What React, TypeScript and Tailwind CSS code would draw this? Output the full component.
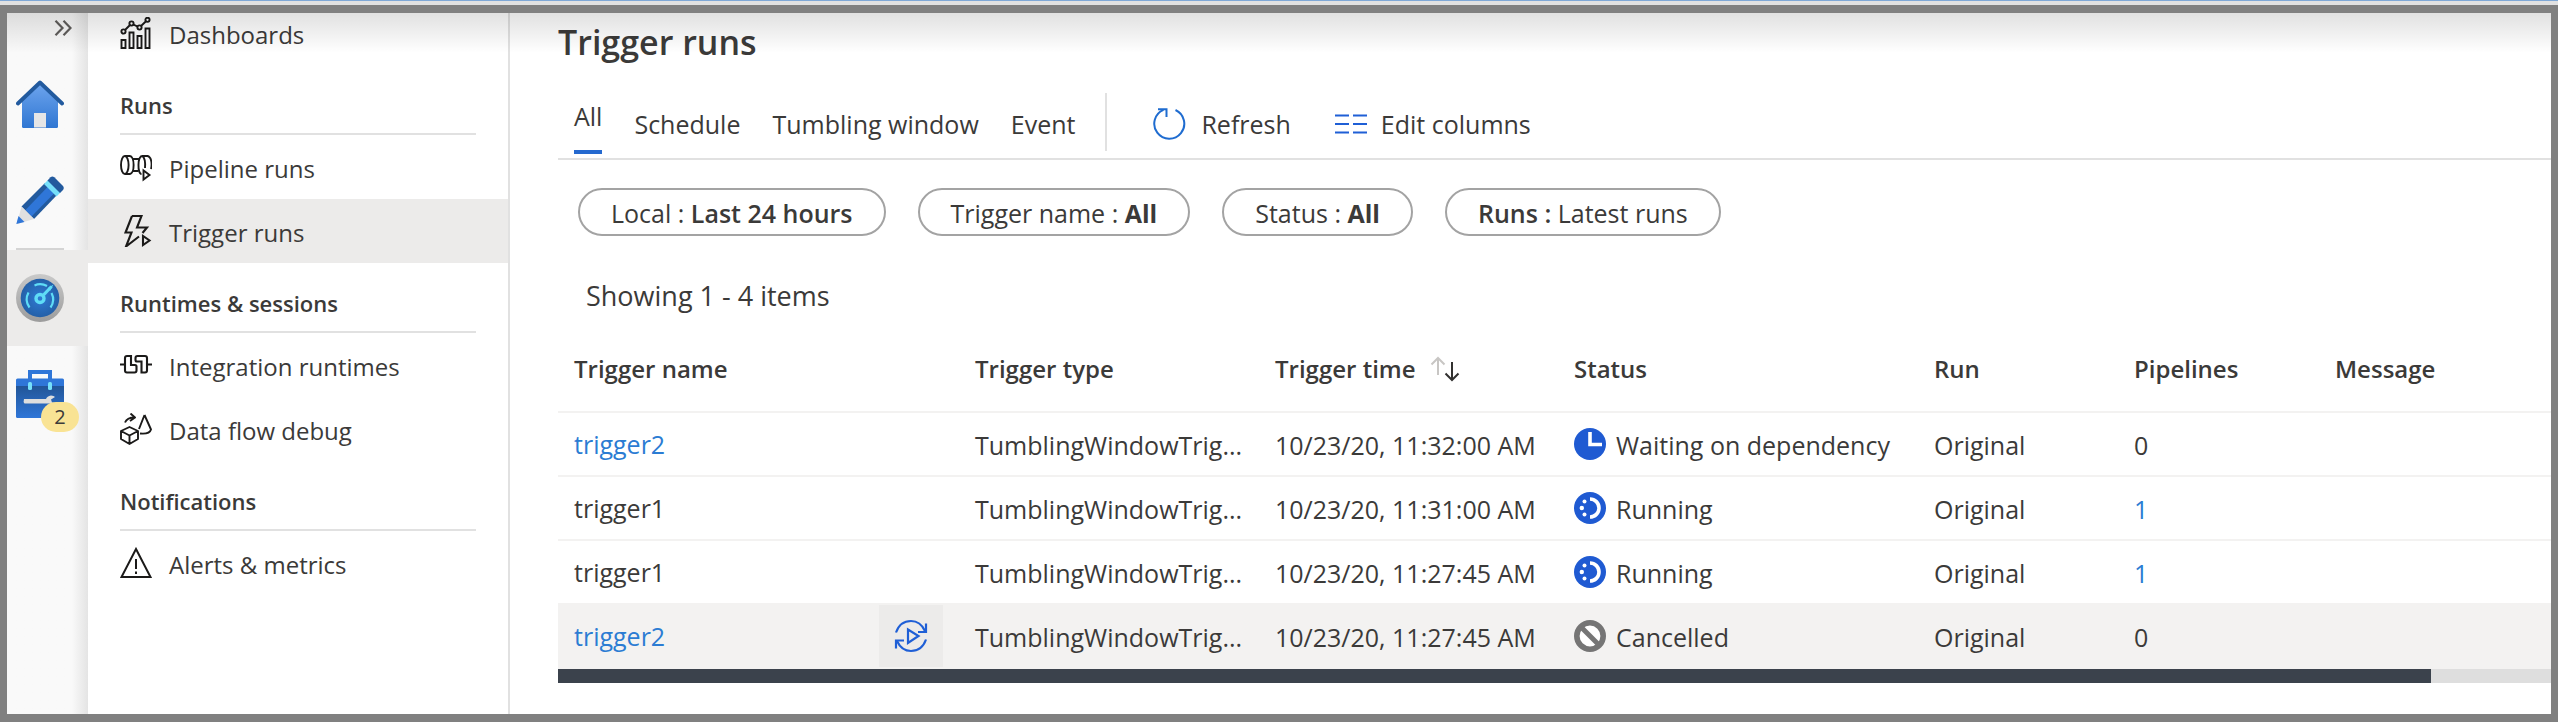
import type { ReactNode } from "react";

function ExpandIcon() {
  return (
    <svg viewBox="0 0 18 16" className="h-4 w-[18px]" fill="none" stroke="#605e5c" strokeWidth="2.2">
      <path d="M1.5 .8 8.5 8l-7 7.2M9.5.8l7 7.2-7 7.2" />
    </svg>
  );
}

function HomeIcon() {
  return (
    <svg viewBox="0 0 48 48" className="size-12">
      <defs>
        <linearGradient id="house" x1="0" y1="0" x2="0" y2="1">
          <stop offset="0" stopColor="#6ea5ee" />
          <stop offset="1" stopColor="#2f76d2" />
        </linearGradient>
      </defs>
      <path d="M24 3 42 20v26.500q0 1.500-1.500 1.500h-33Q6 48 6 46.500V20Z" fill="url(#house)" />
      <path d="M18 33h12v14.500H18Z" fill="#e6e6e6" />
      <path d="M1.900 23.500 24 2.500l22.100 21" fill="none" stroke="#225a9e" strokeWidth="3.800" strokeLinejoin="round" strokeLinecap="round" />
    </svg>
  );
}

function PencilIcon() {
  return (
    <svg viewBox="0 0 48 48" className="size-12">
      <path d="M5.500 30.500 29 7l12 12L18 43Z" fill="#225a9e" />
      <path d="M9.500 34 32 10.500l6.500 6.500L15.500 40.500Z" fill="#2f76d8" />
      <path d="M28 8l4-4 12.500 12.500-4 4Z" fill="#76e0fa" />
      <path d="M31.500 4.500 34.500 1.300q1.800-1.500 3.800 0L47 10q1.500 1.800 0 4L44 17Z" fill="#225a9e" />
      <path d="M5.500 30.500 18 43 1 48Z" fill="#e0e0e0" />
      <path d="M2.500 40 8.500 46 .3 48Z" fill="#2f76d8" />
    </svg>
  );
}

function MonitorIcon() {
  return (
    <svg viewBox="0 0 48 48" className="size-12">
      <defs>
        <linearGradient id="bezel" x1="0" y1="0" x2="0" y2="1">
          <stop offset="0" stopColor="#c9c9c9" />
          <stop offset="1" stopColor="#9c9c9c" />
        </linearGradient>
        <radialGradient id="dial">
          <stop offset="0" stopColor="#2f7ad4" />
          <stop offset="1" stopColor="#2460a8" />
        </radialGradient>
      </defs>
      <circle cx="24" cy="24" r="24" fill="url(#bezel)" />
      <circle cx="24" cy="24" r="19.300" fill="url(#dial)" />
      <g fill="none" stroke="#5fdcf6" strokeWidth="2.200">
        <path d="M13.500 33.500A14 14 0 0 1 12.500 18.500" />
        <path d="M18.500 11.500A14 14 0 0 1 31 12" />
        <path d="M35.500 19A14 14 0 0 1 34.500 33.500" />
        <path d="m27.500 21 8-8.500" strokeWidth="3.200" />
        <circle cx="24" cy="24.500" r="4" strokeWidth="3.400" />
      </g>
      <path d="m32 14 5.500-3.500L34 17Z" fill="#5fdcf6" />
    </svg>
  );
}

function ToolboxIcon() {
  return (
    <svg viewBox="0 0 48 48" className="size-12">
      <defs>
        <linearGradient id="box" x1="0" y1="0" x2="0" y2="1">
          <stop offset="0" stopColor="#225597" />
          <stop offset="1" stopColor="#2f76d8" />
        </linearGradient>
      </defs>
      <path d="M14 9V2h20v7" fill="none" stroke="#2f76d8" strokeWidth="4" />
      <path d="M0 10q0-1.500 1.500-1.500h45q1.500 0 1.500 1.500v7H0Z" fill="#2f76d8" />
      <path d="M0 16h48v30.500q0 1.500-1.500 1.500h-45Q0 48 0 46.500Z" fill="url(#box)" />
      <rect x="12" y="12" width="4" height="8" rx="1.500" fill="#76e0fa" />
      <rect x="32" y="12" width="4" height="8" rx="1.500" fill="#76e0fa" />
      <path d="M8 29h22q1-3 5-3.500 3 0 4 1.500l-4 2.500 1 3 4 1H8.500Q7 32 8 29Z" fill="#dedede" />
    </svg>
  );
}

const navSvg = "size-8 shrink-0";

function DashboardIcon() {
  return (
    <svg viewBox="0 0 32 32" className={navSvg} fill="none" stroke="#1b1a19" strokeWidth="1.900">
      <path d="M1.500 23h4v8h-4ZM9.500 15.500h4V31h-4ZM17.500 19h4v12h-4ZM25.500 11.500h4V31h-4Z" />
      <circle cx="3.500" cy="14.500" r="2.100" />
      <circle cx="11.500" cy="6.500" r="2.100" />
      <circle cx="19.500" cy="10.500" r="2.100" />
      <circle cx="27.500" cy="2.800" r="2.100" />
      <path d="m5 13 5-5M13.300 7.500l4.400 2.200M21 9l5-4.700" />
    </svg>
  );
}

function PipelineIcon() {
  return (
    <svg viewBox="0 0 32 32" className={navSvg} fill="none" stroke="#1b1a19" strokeWidth="1.900">
      <path d="M5 5h5M5 23h5M22 5h6" />
      <ellipse cx="4.800" cy="14" rx="3.800" ry="9" />
      <path d="M9.500 5c5.500 0 5.500 18 0 18" />
      <path d="M13 8h6.500M13 20h5.500" />
      <path d="M22.500 5c-5.200 0-5.200 18-1 18" />
      <path d="M22.500 5c2.300 2 3 6 2.500 12" />
      <path d="M27.500 5c4 1 4.800 8 3.500 13" />
      <path d="M23.500 19.500v9l6-4.500Z" />
    </svg>
  );
}

function TriggerIcon() {
  return (
    <svg viewBox="0 0 32 32" className={navSvg} fill="none" stroke="#1b1a19" strokeWidth="2.100">
      <path d="M12 1h9.500L17 12.500h10L22.500 18M12 1 5.500 17.500h6L6 31.500 19 21.500" />
      <path d="M23 21v9l6.500-4.500Z" />
    </svg>
  );
}

function IntegrationIcon() {
  return (
    <svg viewBox="0 0 32 32" className={navSvg} fill="none" stroke="#1b1a19" strokeWidth="2.100">
      <path d="M0 15.500h5M27 15.500h5" />
      <path d="M11 7H7Q5 7 5 9v12.500q0 2 2 2h7.500q2 0 2-2V17.500q0-1.500-1.500-1.500H11Z" />
      <path d="M21.500 23.500H25q2 0 2-2V9q0-2-2-2h-7.500q-2 0-2 2v2q0 1.500 1.500 1.500h4.500Z" />
    </svg>
  );
}

function DataFlowIcon() {
  return (
    <svg viewBox="0 0 32 32" className={navSvg} fill="none" stroke="#1b1a19" strokeWidth="1.900" strokeLinejoin="round">
      <path d="m1 18 8.500-4 8.500 4v8l-8.500 5L1 26ZM1 18l8.500 4.500L18 18M9.500 22.500V31" />
      <path d="M5 9.500Q7 4.500 14.500 4.500M10.500 .5l4.500 4-5 3.500" />
      <path d="M24.500 2 19 16M24.500 2 31 16.500q-1.500 5-11 4" />
    </svg>
  );
}

function AlertIcon() {
  return (
    <svg viewBox="0 0 32 32" className={navSvg} fill="none" stroke="#1b1a19" strokeWidth="2">
      <path d="M16 2 30.500 30h-29Z" />
      <path d="M16 12v10M16 24.500v2.500" />
    </svg>
  );
}

function RefreshIcon() {
  return (
    <svg viewBox="0 0 34 34" className="size-[34px]" fill="none" stroke="#1f6cd0" strokeWidth="2">
      <path d="M22.500 3a15 15 0 1 1-12-.2" />
      <path d="M5 2.200h8.500V10" />
    </svg>
  );
}

function ColumnsIcon() {
  return (
    <svg viewBox="0 0 32 20" className="h-5 w-8" fill="none" stroke="#1f5fd6" strokeWidth="2.200">
      <path d="M0 1.500h14M18 1.500h14M0 10h14M18 10h14M0 18.500h14M18 18.500h14" />
    </svg>
  );
}

function SortIcon() {
  return (
    <svg viewBox="0 0 30 26" className="h-[26px] w-[30px]" fill="none" strokeWidth="2">
      <path d="M8 19V2M1.500 8.500 8 2l6.500 6.500" stroke="#c8c6c4" />
      <path d="M22 6v18M15.500 17.500 22 24l6.500-6.500" stroke="#323130" />
    </svg>
  );
}

function RerunIcon() {
  return (
    <svg viewBox="0 0 34 34" className="size-[34px]" fill="none" stroke="#1f5fd6" strokeWidth="2.200">
      <path d="M2 13.500C5 5 10 2 17 2c6 0 11 3.500 14 10" />
      <path d="M32 4.500V13h-8" />
      <path d="M32 20.500C29 29 24 32 17 32 11 32 6 28.500 3 22" />
      <path d="M2 29.500V21.500h8" />
      <path d="M14 10.500v13.500L24.500 17Z" />
    </svg>
  );
}

type Status = "Waiting on dependency" | "Running" | "Cancelled";

function StatusIcon({ status }: { status: Status }) {
  const cls = "size-8 shrink-0";
  if (status === "Cancelled") {
    return (
      <svg viewBox="0 0 32 32" className={cls}>
        <circle cx="16" cy="16" r="13.200" fill="#fff" stroke="#757575" strokeWidth="5.600" />
        <path d="m7 7 18 18" stroke="#757575" strokeWidth="5" />
      </svg>
    );
  }
  if (status === "Running") {
    return (
      <svg viewBox="0 0 32 32" className={cls}>
        <circle cx="16" cy="16" r="16" fill="#1f5ad2" />
        <path d="M16 7a9 9 0 0 1 0 18" fill="none" stroke="#fff" strokeWidth="3.600" />
        <g fill="#fff">
          <circle cx="10.500" cy="9.500" r="2" />
          <circle cx="7.800" cy="16" r="2.200" />
          <circle cx="10.500" cy="22.500" r="2" />
        </g>
      </svg>
    );
  }
  return (
    <svg viewBox="0 0 32 32" className={cls}>
      <circle cx="16" cy="16" r="16" fill="#1f5ad2" />
      <path d="M16 4v12.500h12" fill="none" stroke="#fff" strokeWidth="3.600" />
    </svg>
  );
}

function RailButton({ label, active, children }: { label: string; active?: boolean; children: ReactNode }) {
  return (
    <button
      type="button"
      aria-label={label}
      className={`relative flex h-24 w-full items-center pl-[9px] ${active ? "bg-[#ecebea]" : ""}`}
    >
      {children}
    </button>
  );
}

function NavItem({ icon, label, active }: { icon: ReactNode; label: string; active?: boolean }) {
  return (
    <a
      href="#"
      aria-current={active ? "page" : undefined}
      className={`flex h-16 items-center gap-[17px] pl-8 ${active ? "bg-[#ecebea]" : ""}`}
    >
      {icon}
      <span className="pt-1">{label}</span>
    </a>
  );
}

function NavHeading({ children }: { children: ReactNode }) {
  return (
    <h2 className="mx-8 flex h-[70px] items-end border-b-2 border-[#e1e1e1] pb-3 text-[22px] leading-8 font-semibold">
      {children}
    </h2>
  );
}

function Pill({ children }: { children: ReactNode }) {
  return (
    <button type="button" className="h-12 rounded-full border-2 border-[#a3a3a3] px-[31px] leading-[46px] whitespace-nowrap">
      {children}
    </button>
  );
}

const rows: { name: string; time: string; status: Status; pipelines: number; selected?: boolean }[] = [
  { name: "trigger2", time: "10/23/20, 11:32:00 AM", status: "Waiting on dependency", pipelines: 0 },
  { name: "trigger1", time: "10/23/20, 11:31:00 AM", status: "Running", pipelines: 1 },
  { name: "trigger1", time: "10/23/20, 11:27:45 AM", status: "Running", pipelines: 1 },
  { name: "trigger2", time: "10/23/20, 11:27:45 AM", status: "Cancelled", pipelines: 0, selected: true },
];

const link = "text-[#2b7cd3]";

export default function App() {
  return (
    <div className="flex min-h-screen flex-col bg-white font-['Open_Sans',sans-serif] text-2xl text-[#3b3a39]">
      <div className="h-[5px] border-t border-[#7fa8d6] bg-[#e1e1e1]" />
      <div className="relative flex flex-1 border-x-[7px] border-y-8 border-[#808080]">
        <div className="pointer-events-none absolute inset-x-0 top-0 h-10 bg-linear-to-b from-black/12 to-transparent" />

        <nav aria-label="Hubs" className="flex w-[81px] shrink-0 flex-col bg-linear-to-r from-[#f9f9f9] from-80% to-[#e4e4e4]">
          <button type="button" aria-label="Expand" className="flex h-[43px] items-start justify-end pt-[7px] pr-4">
            <ExpandIcon />
          </button>
          <RailButton label="Home">
            <HomeIcon />
          </RailButton>
          <RailButton label="Author">
            <PencilIcon />
          </RailButton>
          <hr className="mr-6 ml-[9px] border-t-2 border-[#d4d4d4]" />
          <RailButton label="Monitor" active>
            <MonitorIcon />
          </RailButton>
          <RailButton label="Manage">
            <ToolboxIcon />
            <span className="absolute top-14 left-[34px] h-[30px] w-[38px] rounded-full bg-[#f9e394] text-center text-xl leading-[30px]">
              2
            </span>
          </RailButton>
        </nav>

        <nav aria-label="Monitoring" className="w-[422px] shrink-0 border-r-2 border-[#e1e1e1]">
          <div className="-mt-3">
            <NavItem icon={<DashboardIcon />} label="Dashboards" />
          </div>
          <NavHeading>Runs</NavHeading>
          <NavItem icon={<PipelineIcon />} label="Pipeline runs" />
          <NavItem icon={<TriggerIcon />} label="Trigger runs" active />
          <NavHeading>Runtimes &amp; sessions</NavHeading>
          <NavItem icon={<IntegrationIcon />} label="Integration runtimes" />
          <NavItem icon={<DataFlowIcon />} label="Data flow debug" />
          <NavHeading>Notifications</NavHeading>
          <NavItem icon={<AlertIcon />} label="Alerts & metrics" />
        </nav>

        <main className="min-w-0 flex-1 pt-1 pl-12 text-[25px] leading-9">
          <h1 className="text-[34px] leading-[50px] font-semibold">Trigger runs</h1>

          <div className="mt-[18px] flex h-[75px] items-center border-b-2 border-[#e1e1e1] pl-4">
            <div role="tablist" className="flex items-center gap-8 pt-1">
              <button type="button" role="tab" aria-selected="true" className="border-b-4 border-[#2569cf] pt-1 pb-4">
                All
              </button>
              <button type="button" role="tab" aria-selected="false">Schedule</button>
              <button type="button" role="tab" aria-selected="false">Tumbling window</button>
              <button type="button" role="tab" aria-selected="false">Event</button>
            </div>
            <div className="ml-[30px] h-[58px] w-0.5 bg-[#e1e1e1]" />
            <button type="button" className="ml-[46px] flex items-center gap-[14px] pt-1">
              <RefreshIcon />
              Refresh
            </button>
            <button type="button" className="ml-11 flex items-center gap-[14px] pt-1">
              <ColumnsIcon />
              Edit columns
            </button>
          </div>

          <div className="mt-7 flex gap-8 pl-5">
            <Pill>
              Local : <b className="font-semibold">Last 24 hours</b>
            </Pill>
            <Pill>
              Trigger name : <b>All</b>
            </Pill>
            <Pill>
              Status : <b>All</b>
            </Pill>
            <Pill>
              <b className="font-semibold">Runs :</b> Latest runs
            </Pill>
          </div>

          <p className="mt-10 pl-7 text-[27px] leading-10">Showing 1 - 4 items</p>

          <div className="mt-3 overflow-hidden">
            <table className="w-full table-fixed text-left whitespace-nowrap">
              <colgroup>
                <col className="w-[401px]" />
                <col className="w-[300px]" />
                <col className="w-[299px]" />
                <col className="w-[360px]" />
                <col className="w-[200px]" />
                <col className="w-[201px]" />
                <col />
              </colgroup>
              <thead>
                <tr className="h-[84px] border-b-2 border-[#f3f2f1] text-2xl *:pb-0.5 *:pl-4 *:font-semibold">
                  <th>Trigger name</th>
                  <th>Trigger type</th>
                  <th>
                    <button type="button" className="flex items-center gap-[14px]">
                      Trigger time
                      <SortIcon />
                    </button>
                  </th>
                  <th>Status</th>
                  <th>Run</th>
                  <th>Pipelines</th>
                  <th>Message</th>
                </tr>
              </thead>
              <tbody>
                {rows.map((row, i) => (
                  <tr
                    key={i}
                    className={`h-16 border-b-2 border-[#f3f2f1] *:pl-4 ${row.selected ? "bg-[#f3f2f1]" : ""}`}
                  >
                    <td>
                      <div className="flex items-center justify-between pr-4">
                        {row.name === "trigger2" ? <a href="#" className={link}>{row.name}</a> : row.name}
                        {row.selected && (
                          <button type="button" aria-label="Rerun" className="flex h-[62px] w-16 items-center justify-center bg-[#ecebea]">
                            <RerunIcon />
                          </button>
                        )}
                      </div>
                    </td>
                    <td className="pt-0.5">TumblingWindowTrig...</td>
                    <td className="pt-0.5">{row.time}</td>
                    <td>
                      <div className="flex items-center gap-[10px]">
                        <StatusIcon status={row.status} />
                        <span className="pt-0.5">{row.status}</span>
                      </div>
                    </td>
                    <td className="pt-0.5">Original</td>
                    <td className="pt-0.5">{row.pipelines > 0 ? <a href="#" className={link}>{row.pipelines}</a> : row.pipelines}</td>
                    <td />
                  </tr>
                ))}
              </tbody>
            </table>
            <div className="h-[14px] bg-[#dedede]">
              <div className="h-full w-[94%] bg-[#3b424c]" />
            </div>
          </div>
        </main>
      </div>
    </div>
  );
}
